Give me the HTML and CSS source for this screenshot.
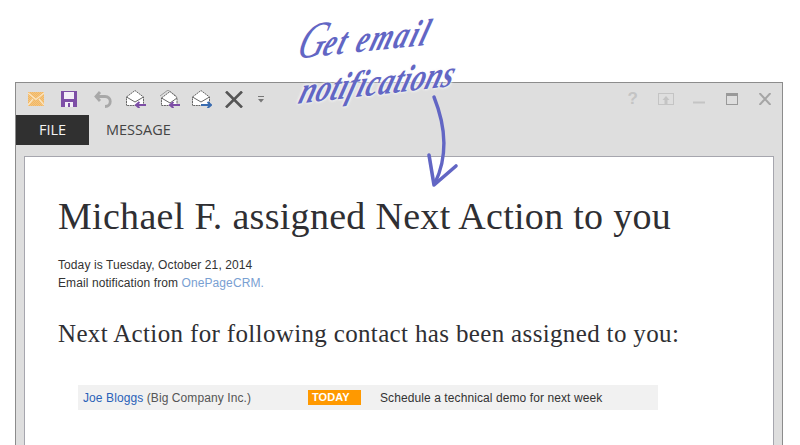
FILE: index.html
```html
<!DOCTYPE html>
<html lang="en">
<head>
<meta charset="utf-8">
<title>Get email notifications</title>
<link rel="stylesheet" href="styles.css">
</head>
<body>
<div class="page">
  <div class="window">
    <div class="toolbar">
      <div class="tools">
        <svg class="ico" width="16" height="14" viewBox="0 0 16 14"><defs><pattern id="chk" width="2" height="2" patternUnits="userSpaceOnUse"><rect width="2" height="2" fill="#f5c77e"/><rect width="1" height="1" fill="#f0b566"/><rect x="1" y="1" width="1" height="1" fill="#f0b566"/></pattern></defs><rect width="16" height="14" fill="url(#chk)"/><path d="M0 1l8 6.500L16 1M0 13l5-6M16 13l-5-6" fill="none" stroke="#fbe6c4" stroke-width="1.300"/></svg>
        <svg class="ico" width="16" height="16" viewBox="0 0 16 16"><path d="M0 0h16v16H0z" fill="#7d4ea6"/><rect x="3" y="1" width="10" height="7" fill="#f3eef7"/><rect x="4" y="11" width="8" height="5" fill="#f3eef7"/><rect x="7" y="12" width="2" height="4" fill="#7d4ea6"/></svg>
        <svg class="ico" width="18" height="17" viewBox="0 0 18 17"><path d="M6 1L2 5.500 6 10M2 5.500h9c7 0 7 10 0 10" fill="none" stroke="#a8a8a8" stroke-width="2.800"/></svg>
        <svg class="ico" width="20" height="18" viewBox="0 0 20 18"><path d="M.5 7L9 .5 17.500 7v8.500H.5z" fill="#fff" stroke="#666" stroke-dasharray="2 .6"/><path d="M.5 7L9 12l8.500-5" fill="none" stroke="#666"/><path d="M20 15h-10M13.500 12L10 15l3.500 3" fill="none" stroke="#7d4ea6" stroke-width="2"/></svg>
        <svg class="ico" width="21" height="18" viewBox="0 0 21 18"><path d="M1 6l8-6 8 6" fill="none" stroke="#999"/><path d="M2.500 8L11 1.500 18 7.500v8H2.500z" fill="#fff" stroke="#666" stroke-dasharray="2 .6"/><path d="M2.500 8L11 13l7-5" fill="none" stroke="#666"/><path d="M21 15h-10M14.500 12L11 15l3.500 3" fill="none" stroke="#7d4ea6" stroke-width="2"/></svg>
        <svg class="ico" width="20" height="18" viewBox="0 0 20 18"><path d="M.5 7L9 .5 17.500 7v8.500H.5z" fill="#fff" stroke="#666" stroke-dasharray="2 .6"/><path d="M.5 7L9 12l8.500-5" fill="none" stroke="#666"/><path d="M9 15h10M15.500 12L19 15l-3.500 3" fill="none" stroke="#3a6cb0" stroke-width="2"/></svg>
        <svg class="ico" width="18" height="17" viewBox="0 0 18 17"><path d="M1 .5l16 16M17 .5L1 16.500" fill="none" stroke="#555" stroke-width="2.600"/></svg>
        <svg class="ico" width="6" height="7" viewBox="0 0 6 7"><path d="M0 .5h6" stroke="#777"/><path d="M0 3h6L3 6.500z" fill="#777"/></svg>
      </div>
      <div class="controls">
        <span class="help">?</span>
        <svg class="ctl-up" width="16" height="12" viewBox="0 0 16 12"><rect x=".5" y=".5" width="15" height="11" fill="none" stroke="#c4c4c4"/><path d="M8 3l3.500 4H9.500v4h-3V7H4.500z" fill="#c4c4c4"/></svg>
        <svg class="ctl-min" width="12" height="12" viewBox="0 0 12 12"><path d="M0 9.500h12" stroke="#c4c4c4" stroke-width="2"/></svg>
        <svg class="ctl-max" width="12" height="12" viewBox="0 0 12 12"><rect x=".5" y=".5" width="11" height="11" fill="none" stroke="#999"/><rect width="12" height="3" fill="#999"/></svg>
        <svg class="ctl-max" width="12" height="12" viewBox="0 0 12 12"><path d="M.5 0l11 12M11.500 0L.5 12" stroke="#a5a5a5" stroke-width="2"/></svg>
      </div>
    </div>
    <div class="tabs">
      <div class="tab tab-file">FILE</div>
      <div class="tab">MESSAGE</div>
    </div>
    <div class="mail">
      <h1 class="title">Michael F. assigned Next Action to you</h1>
      <p class="meta">Today is Tuesday, October 21, 2014<br>Email notification from <a class="brand">OnePageCRM.</a></p>
      <h2 class="subtitle">Next Action for following contact has been assigned to you:</h2>
      <div class="row">
        <div class="contact"><a class="name">Joe Bloggs</a> (Big Company Inc.)</div>
        <div class="badge">TODAY</div>
        <div class="task">Schedule a technical demo for next week</div>
      </div>
    </div>
  </div>
  <div class="note">
    <div class="note-line note-one"><span class="cap">G</span>et email</div>
    <div class="note-line note-two">notifications</div>
    <svg class="arrow" width="34" height="100" viewBox="0 0 34 100"><path d="M8 5C18 30 24 60 9 91" fill="none" stroke="#6266c4" stroke-width="3.400" stroke-linecap="round"/><path d="M3 63l5 30L30 74" fill="none" stroke="#6266c4" stroke-width="3.600" stroke-linecap="round" stroke-linejoin="round"/></svg>
  </div>
</div>
</body>
</html>
```
FILE: styles.css
```css
html, body { margin: 0; padding: 0; background: #fff; }
body { width: 800px; height: 445px; overflow: hidden; font-family: "Liberation Sans", Arial, sans-serif; }
.page { position: relative; height: 445px; padding: 82px 17px 0 15px; box-sizing: border-box; overflow: hidden; }
.window { height: 363px; box-sizing: border-box; background: #dedede; border: 1px solid #8c8c8c; border-bottom: 0; display: flex; flex-direction: column; }
.toolbar { height: 32px; flex: none; display: flex; align-items: center; justify-content: space-between; padding: 0 11px 0 12px; }
.tools { display: grid; grid-template-columns: repeat(8, 32.8px); align-items: center; }
.controls { display: flex; align-items: center; }
.help { font: bold 17px/16px "Liberation Sans", sans-serif; color: #c4c4c4; }
.ctl-up { margin-left: 20px; }
.ctl-min { margin-left: 19px; }
.ctl-max { margin-left: 21px; }
.tabs { height: 30px; flex: none; display: flex; font: 14.500px/30px "Open Sans", sans-serif; color: #444; }
.tab { padding: 0 17px; }
.tab-file { width: 73px; box-sizing: border-box; padding: 0; text-align: center; background: #303030; color: #f4f4f4; }
.mail { flex: 1; margin: 11px 8px 0 8px; background: #fff; border: 1px solid #a6a6ae; border-bottom: 0; padding: 0 33px; }
.title { margin: 37px 0 0; font: 400 38px/44px "Liberation Serif", serif; letter-spacing: .3px; color: #2f2f33; white-space: nowrap; }
.meta { margin: 18px 0 0; font-size: 12px; line-height: 18px; letter-spacing: .09px; color: #333; }
.brand { color: #79a0d2; }
.subtitle { margin: 27px 0 0; font: 400 25px/30px "Liberation Serif", serif; letter-spacing: .35px; color: #2f2f33; white-space: nowrap; }
.row { margin: 36px 0 0 20px; width: 580px; height: 25px; background: #f1f1f1; display: flex; align-items: center; font-size: 12px; letter-spacing: .09px; color: #555; }
.contact { width: 225px; padding-left: 5px; box-sizing: border-box; }
.name { color: #2a62b8; }
.badge { width: 53px; height: 15px; margin-left: 5px; box-sizing: border-box; padding-left: 4px; background: #ff9900; color: #fff; font-size: 11px; line-height: 15px; font-weight: 700; }
.task { margin-left: 19px; color: #333; }
.note { position: absolute; left: 0; top: 0; width: 800px; height: 200px; color: #6266c4; pointer-events: none; }
.note-line { position: absolute; font: italic 700 37px/36px "Liberation Serif", serif; white-space: nowrap; transform-origin: left bottom; }
.note-one { left: 293px; top: 24px; letter-spacing: 2.500px; transform: rotate(-6deg) skewX(-24deg) scaleX(.76); }
.cap { font-size: 50px; font-weight: 400; letter-spacing: -2px; }
.note-two { left: 295px; top: 74px; letter-spacing: .4px; transform: rotate(-6.500deg) skewX(-24deg) scaleX(.79); text-shadow: 0 0 3px #fff, 0 0 4px #f4f4f4; }
.arrow { position: absolute; left: 426px; top: 92px; }
```
